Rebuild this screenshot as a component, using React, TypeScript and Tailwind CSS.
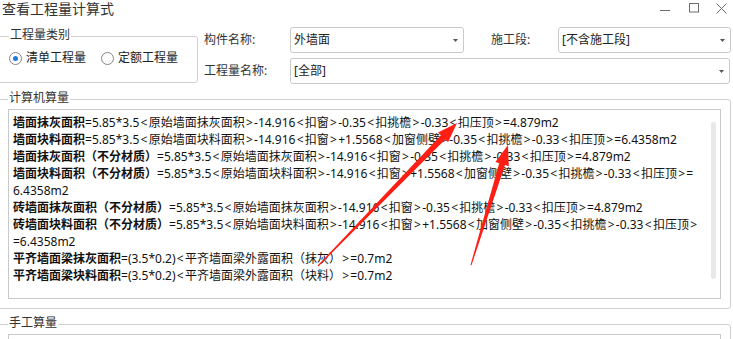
import React from 'react';

type Line = { b?: string; t: string };

const lines: Line[] = [
  { b: '墙面抹灰面积', t: '=5.85*3.5<原始墙面抹灰面积>-14.916<扣窗>-0.35<扣挑檐>-0.33<扣压顶>=4.879m2' },
  { b: '墙面块料面积', t: '=5.85*3.5<原始墙面块料面积>-14.916<扣窗>+1.5568<加窗侧壁>-0.35<扣挑檐>-0.33<扣压顶>=6.4358m2' },
  { b: '墙面抹灰面积（不分材质）', t: '=5.85*3.5<原始墙面抹灰面积>-14.916<扣窗>-0.35<扣挑檐>-0.33<扣压顶>=4.879m2' },
  { b: '墙面块料面积（不分材质）', t: '=5.85*3.5<原始墙面块料面积>-14.916<扣窗>+1.5568<加窗侧壁>-0.35<扣挑檐>-0.33<扣压顶>=' },
  { t: '6.4358m2' },
  { b: '砖墙面抹灰面积（不分材质）', t: '=5.85*3.5<原始墙面抹灰面积>-14.916<扣窗>-0.35<扣挑檐>-0.33<扣压顶>=4.879m2' },
  { b: '砖墙面块料面积（不分材质）', t: '=5.85*3.5<原始墙面块料面积>-14.916<扣窗>+1.5568<加窗侧壁>-0.35<扣挑檐>-0.33<扣压顶>' },
  { t: '=6.4358m2' },
  { b: '平齐墙面梁抹灰面积', t: '=(3.5*0.2)<平齐墙面梁外露面积（抹灰）>=0.7m2' },
  { b: '平齐墙面梁块料面积', t: '=(3.5*0.2)<平齐墙面梁外露面积（块料）>=0.7m2' },
];

// angle brackets sit a little wider in the original font
function Formula({ text }: { text: string }) {
  return (
    <>
      {text.split(/([<>])/).map((part, i) =>
        part === '<' || part === '>' ? (
          <span key={i} className="px-[1.25px]">
            {part}
          </span>
        ) : (
          <React.Fragment key={i}>{part}</React.Fragment>
        ),
      )}
    </>
  );
}

function Combo({ value, className = '' }: { value: string; className?: string }) {
  return (
    <div
      className={`h-[26px] border border-[#c9c9c9] rounded-[3px] flex items-center justify-between pl-[3px] pr-[5px] text-[12px] text-[#222] ${className}`}
    >
      <span>{value}</span>
      <svg width="5" height="3" viewBox="0 0 5 3">
        <polygon points="0,0 5,0 2.5,3" fill="#555" />
      </svg>
    </div>
  );
}

function Radio({ checked, label, className = '' }: { checked?: boolean; label: string; className?: string }) {
  return (
    <div className={`flex items-center gap-[4px] ${className}`}>
      <div className="w-[13px] h-[13px] rounded-full border border-[#858585] flex items-center justify-center">
        {checked && <div className="w-[5px] h-[5px] rounded-full bg-[#1e78e6]" />}
      </div>
      <span className="text-[12px] leading-[16px] text-[#222]">{label}</span>
    </div>
  );
}

function Legend({ children }: { children: React.ReactNode }) {
  return <legend className="px-[1px] pb-[3px] text-[12px] leading-[16px] text-[#333]">{children}</legend>;
}

export default function App() {
  return (
    <div className="relative w-[733px] h-[339px] overflow-hidden bg-white font-['Noto_Sans','Noto_Sans_CJK_SC',sans-serif]">
      {/* title bar */}
      <div className="h-[27px] flex justify-between">
        <div className="pl-[2px] text-[14px] leading-[18px] text-[#333]">查看工程量计算式</div>
        <div className="flex gap-[17px] pt-[3px] pr-[6px]">
          <svg width="11" height="11" viewBox="0 0 11 11">
            <line x1="0" y1="7.5" x2="10" y2="7.5" stroke="#6b6b6b" strokeWidth="1" />
          </svg>
          <svg width="11" height="11" viewBox="0 0 11 11">
            <rect x="1.5" y="0.5" width="9" height="8.5" fill="none" stroke="#6b6b6b" strokeWidth="1" />
          </svg>
          <svg width="11" height="11" viewBox="0 0 11 11">
            <path d="M0.5 0.5 L10.5 10.5 M10.5 0.5 L0.5 10.5" stroke="#6b6b6b" strokeWidth="1" />
          </svg>
        </div>
      </div>

      {/* filters */}
      <div className="flex">
        <fieldset className="ml-[-2px] w-[200px] h-[56px] border border-[#d0d0d0] rounded-[3px] pl-[10px]">
          <Legend>工程量类别</Legend>
          <div className="flex items-center h-[16px] mt-[4px]">
            <Radio checked label="清单工程量" />
            <Radio label="定额工程量" className="ml-[15px]" />
          </div>
        </fieldset>
        <div className="ml-[6px] flex flex-col gap-[5px] text-[12px] text-[#333]">
          <div className="flex items-center">
            <span className="w-[86px]">构件名称:</span>
            <Combo value="外墙面" className="w-[174px]" />
            <span className="ml-[27px] w-[67px]">施工段:</span>
            <Combo value="[不含施工段]" className="w-[173px]" />
          </div>
          <div className="flex items-center">
            <span className="w-[86px]">工程量名称:</span>
            <Combo value="[全部]" className="w-[440px]" />
          </div>
        </div>
      </div>

      {/* computer quantities */}
      <fieldset className="mt-[6px] ml-[-2px] w-[733px] border border-[#d0d0d0] rounded-[3px] px-[9px] pb-[9px]">
        <Legend>计算机算量</Legend>
        <div className="h-[190px] border border-[#c9c9c9] flex">
          <div className="flex-1 overflow-hidden pl-[4px] pt-[4px] text-[12px] leading-[17px] text-[#111]">
            {lines.map((l, i) => (
              <div key={i} className="whitespace-nowrap">
                {l.b && <span className="font-bold">{l.b}</span>}
                <Formula text={l.t} />
              </div>
            ))}
          </div>
          <div className="w-[5px] h-[157px] mt-[12px] mr-[4px] rounded-full bg-[#e8e8e8]" />
        </div>
      </fieldset>

      {/* manual quantities */}
      <fieldset className="mt-[6px] ml-[-2px] w-[733px] border border-[#d0d0d0] rounded-[3px] px-[9px]">
        <Legend>手工算量</Legend>
        <div className="h-[40px] border border-[#c9c9c9]" />
      </fieldset>

      {/* annotation arrows */}
      <svg className="absolute inset-0 pointer-events-none" width="733" height="339" viewBox="0 0 733 339">
        <polygon
          points="318.4,266.4 445.2,139.4 448.1,142.2 457,123 438,132.5 440.9,135.3 317.6,265.6"
          fill="#ff1e14"
        />
        <polygon
          points="471.5,265.2 505,165 508.8,166.2 508,145 495.4,162 499.2,163.2 470.5,264.9"
          fill="#ff1e14"
        />
      </svg>
    </div>
  );
}
